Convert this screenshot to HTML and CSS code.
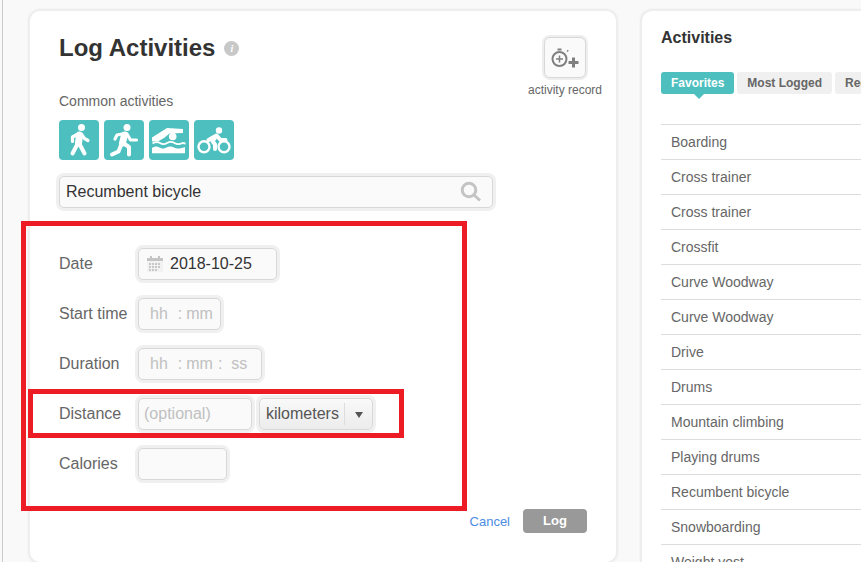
FILE: index.html
```html
<!DOCTYPE html>
<html lang="en">
<head>
<meta charset="utf-8">
<title>Log Activities</title>
<link rel="stylesheet" href="styles.css">
</head>
<body>
<div class="page">
  <main class="card log-card">
    <div class="log-head">
      <div class="log-head-main">
        <h1 class="title">Log Activities <span class="info">i</span></h1>
        <div class="common-label">Common activities</div>
        <div class="icons">
          <span class="sport"><svg viewBox="0 0 40 40"><circle cx="22.500" cy="7.500" r="3.500"/><path class="limb thick" d="M20.500 15L19.500 23"/><path class="limb" d="M19 23L13.500 33.500M20 23L25.500 33.500"/><path class="limb thin" d="M18 14.500L13.500 17V21.500M23 15L25.500 18.500 29 20.500"/></svg></span>
          <span class="sport"><svg viewBox="0 0 40 40"><circle cx="23" cy="7.500" r="3.500"/><path class="limb thick" d="M20.500 15L18.500 23"/><path class="limb" d="M19 23L25 27V34.500M17.500 24L14.500 31.500 8 34.500"/><path class="limb thin" d="M18 14L13 15 11 19M23 14L26.500 20H32.500"/></svg></span>
          <span class="sport"><svg viewBox="0 0 40 40"><circle cx="23.700" cy="16.500" r="3.800"/><path d="M3 17.500L18 8l16 1v4l-13.500.5L15 18l-6 3.500H3z"/><path class="wave" d="M3.500 23.500c3-2 5-2 7.500-.5s4.500 1.500 7 0 5-1.500 7.500 0 5 1.500 8 0l3 .5"/><path d="M3 28c3-2 5-2 7.500-.5s4.500 1.500 7 0 5-1.500 7.500 0 5 1.500 11-.5v6.300H3z"/></svg></span>
          <span class="sport"><svg viewBox="0 0 40 40"><circle cx="25" cy="10.500" r="3.200"/><path class="limb" d="M14.500 20L22.500 15.500 26.500 20H31.500M21.500 17L18.500 21 21 24.500V29"/><g class="wheel"><circle cx="10" cy="26.700" r="5.500"/><circle cx="30" cy="26.700" r="5.500"/></g></svg></span>
        </div>
      </div>
      <div class="record">
        <span class="record-btn"><svg viewBox="0 0 34 28"><g class="stop"><circle cx="11.500" cy="15" r="7"/><path d="M11.500 11.500v7M8 15h7"/></g><path class="stop-top" d="M9.500 4.500h4v2h-4zM18.500 7l1.300-1.300 1 1L19.500 8z"/><path class="plus" d="M25.500 13.500v10M20.500 18.500h10"/></svg></span>
        <span class="record-label">activity record</span>
      </div>
    </div>
    <div class="field search">
      <span class="search-text">Recumbent bicycle</span>
      <svg class="search-icon" viewBox="0 0 22 22"><circle cx="9" cy="9" r="6.800"/><path d="M14 14l6 5.500"/></svg>
    </div>
    <form class="rows">
      <div class="row">
        <label class="row-label">Date</label>
        <div class="field date">
          <svg class="cal" viewBox="0 0 16 16"><path class="cal-bg" d="M0 2h16v14H0z"/><path class="cal-top" d="M0 2h16v3H0zM3 0h2v3H3zM11 0h2v3h-2z"/><path class="cal-dots" d="M2 7h2v2H2zM5 7h2v2H5zM8 7h2v2H8zM11 7h2v2h-2zM2 10h2v2H2zM5 10h2v2H5zM8 10h2v2H8zM11 10h2v2h-2zM2 13h2v2H2zM5 13h2v2H5zM8 13h2v2H8z"/></svg>
          <span class="value">2018-10-25</span>
        </div>
      </div>
      <div class="row">
        <label class="row-label">Start time</label>
        <div class="field start"><span class="ph ph-h">hh</span><span class="ph ph-c">:</span><span class="ph">mm</span></div>
      </div>
      <div class="row">
        <label class="row-label">Duration</label>
        <div class="field duration"><span class="ph ph-h">hh</span><span class="ph ph-c">:</span><span class="ph">mm</span><span class="ph ph-c2">:</span><span class="ph ph-s">ss</span></div>
      </div>
      <div class="row">
        <label class="row-label">Distance</label>
        <div class="field distance"><span class="ph">(optional)</span></div>
        <div class="field unit"><span class="unit-text">kilometers</span><span class="unit-arrow"></span></div>
      </div>
      <div class="row">
        <label class="row-label">Calories</label>
        <div class="field calories"></div>
      </div>
    </form>
    <div class="actions">
      <a class="cancel">Cancel</a>
      <span class="log-btn">Log</span>
    </div>
  </main>
  <aside class="card list-card">
    <h2 class="list-title">Activities</h2>
    <div class="tabs">
      <span class="tab tab-on">Favorites</span>
      <span class="tab">Most Logged</span>
      <span class="tab">Recent</span>
    </div>
    <ul class="list">
      <li>Boarding</li>
      <li>Cross trainer</li>
      <li>Cross trainer</li>
      <li>Crossfit</li>
      <li>Curve Woodway</li>
      <li>Curve Woodway</li>
      <li>Drive</li>
      <li>Drums</li>
      <li>Mountain climbing</li>
      <li>Playing drums</li>
      <li>Recumbent bicycle</li>
      <li>Snowboarding</li>
      <li>Weight vest</li>
    </ul>
  </aside>
</div>
<div class="mark mark-big"></div>
<div class="mark mark-small"></div>
</body>
</html>
```
FILE: styles.css
```css
* { box-sizing: border-box; }
html, body { margin: 0; height: 100%; overflow: hidden; }
body {
  background: #f9f9f9;
  font-family: "Liberation Sans", Arial, sans-serif;
  color: #666;
  position: relative;
  border-left: 2px solid #f9f9f9;
}
body::before {
  content: "";
  position: absolute;
  left: 0; top: 0; bottom: 0;
  width: 1px;
  background: #ccc;
}
.page {
  display: flex;
  align-items: flex-start;
  gap: 22px;
  padding: 9px 0 0 26px;
  width: 1000px;
}
.card {
  background: #fff;
  border: 2px solid #eee;
  border-radius: 12px;
  box-shadow: 0 0 0 1px #f5f5f5;
}
.log-card { width: 590px; height: 555px; flex: none; padding: 19px 29px 0 29px; }
.list-card { width: 300px; height: 700px; flex: none; padding: 17px 0 0 19px; }

.log-head { display: flex; justify-content: space-between; height: 146px; }
.title {
  margin: 0;
  font-size: 24px;
  line-height: 36px;
  font-weight: bold;
  color: #333;
  display: flex;
  align-items: center;
  gap: 9px;
}
.info {
  width: 15px; height: 15px;
  border-radius: 50%;
  background: #c8c8c8;
  color: #fff;
  font: italic bold 10px/15px "Liberation Serif", serif;
  text-align: center;
}
.common-label { font-size: 14px; line-height: 18px; margin-top: 26px; }
.icons { display: flex; gap: 5px; margin-top: 10px; }
.sport {
  width: 40px; height: 40px;
  background: #4dbfbf;
  border-radius: 4px;
  display: block;
}
.sport svg { width: 40px; height: 40px; display: block; fill: #fff; }
.limb { fill: none; stroke: #fff; stroke-width: 4; stroke-linecap: round; stroke-linejoin: round; }
.limb.thick { stroke-width: 7; }
.limb.thin { stroke-width: 3.200; }
.wave { fill: none; stroke: #fff; stroke-width: 1.800; }
.sport .wheel circle { fill: none; stroke: #fff; stroke-width: 2.400; }

.record {
  display: flex; flex-direction: column; align-items: center;
  width: 76px; margin: 7px -16px 0 0;
}
.record-btn {
  width: 42px; height: 41px;
  background: #fafafa;
  border: 1px solid #d8d8d8;
  box-shadow: 0 0 0 2px #eee;
  border-radius: 6px;
  display: flex; align-items: center; justify-content: center;
}
.record-btn svg { width: 34px; height: 28px; flex: none; }
.stop circle, .stop path { fill: none; stroke: #808080; stroke-width: 2; }
.stop path { stroke-width: 1.500; }
.stop-top { fill: #808080; }
.plus { fill: none; stroke: #808080; stroke-width: 3; }
.record-label { font-size: 12px; line-height: 14px; margin-top: 5px; white-space: nowrap; }

.field {
  height: 32px;
  background: #fafafa;
  border: 1px solid #d8d8d8;
  border-radius: 5px;
  box-shadow: 0 0 0 3px #f0f0f0;
  display: flex;
  align-items: center;
  font-size: 16px;
  color: #333;
}
.search {
  width: 434px; height: 32px;
  padding: 0 10px 0 6px;
  justify-content: space-between;
}
.search-icon { width: 22px; height: 22px; fill: none; stroke: #c4c4c4; stroke-width: 3; }

.rows { display: flex; flex-direction: column; gap: 18px; margin-top: 40px; }
.row { display: flex; align-items: center; height: 32px; }
.row-label { width: 79px; font-size: 16px; color: #666; }
.date { width: 139px; padding-left: 8px; }
.cal { width: 16px; height: 16px; margin-right: 7px; }
.cal-bg { fill: #f2f2f2; }
.cal-top { fill: #c4c4c4; }
.cal-dots { fill: #c8c8c8; }
.value { color: #333; }
.ph { color: #c0c0c0; }
.ph-h { margin-left: 11px; }
.ph-c { margin: 0 4px 0 10px; }
.ph-c2 { margin: 0 9px 0 5px; }
.start { width: 83px; }
.duration { width: 124px; }
.distance { width: 114px; padding-left: 5px; }
.unit {
  width: 114px; margin-left: 7px;
  background: linear-gradient(#f9f9f9, #ececec);
  padding-left: 6px;
  color: #555;
}
.unit-text { flex: 1; padding-right: 5px; border-right: 1px solid #ddd; line-height: 22px; white-space: nowrap; }
.unit-arrow {
  flex: none;
  width: 0; height: 0;
  margin: 2px 10px 0 10px;
  border-left: 4px solid transparent;
  border-right: 4px solid transparent;
  border-top: 6px solid #555;
}
.calories { width: 89px; }

.actions {
  display: flex; justify-content: flex-end; align-items: center;
  gap: 13px;
  margin-top: 29px;
}
.cancel { font-size: 13px; color: #4c8ce0; }
.log-btn {
  width: 64px; height: 24px;
  background: #999;
  color: #fff;
  border-radius: 4px;
  font-size: 13px;
  font-weight: bold;
  line-height: 24px;
  text-align: center;
}

.list-title { margin: 0; font-size: 16px; line-height: 20px; color: #333; font-weight: bold; }
.tabs { display: flex; gap: 3px; margin-top: 24px; }
.tab {
  background: #f0f0f0;
  border-radius: 3px;
  height: 22px;
  padding: 0 10px;
  font-size: 12px;
  line-height: 22px;
  font-weight: bold;
  color: #666;
  white-space: nowrap;
  position: relative;
}
.tab-on { background: #4dbfbf; color: #fff; }
.tab-on::after {
  content: "";
  position: absolute;
  left: 33px; top: 22px;
  border-left: 5px solid transparent;
  border-right: 5px solid transparent;
  border-top: 5px solid #4dbfbf;
}
.list { list-style: none; margin: 30px 0 0; padding: 0; border-top: 1px solid #ddd; }
.list li {
  height: 35px;
  padding-left: 10px;
  font-size: 14px;
  line-height: 34px;
  border-bottom: 1px solid #ddd;
  color: #666;
}

.mark { position: absolute; border: 5px solid #ed1c24; pointer-events: none; }
.mark-big { left: 19px; top: 221px; width: 446px; height: 290px; }
.mark-small { left: 26px; top: 389px; width: 376px; height: 49px; }
```
